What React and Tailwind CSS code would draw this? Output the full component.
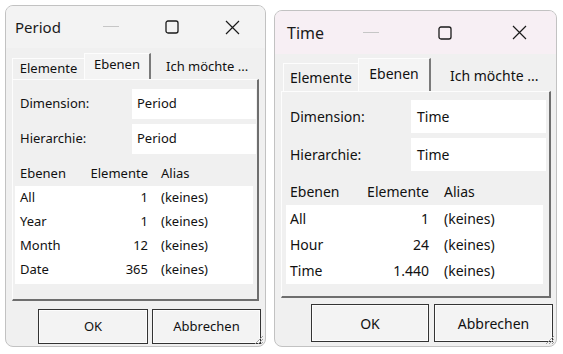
import React from "react";

const FONT = { fontFamily: '"Noto Sans", "Open Sans", sans-serif' };

const left = {
  title: "Period",
  name: "Period",
  rows: [
    ["All", "1"],
    ["Year", "1"],
    ["Month", "12"],
    ["Date", "365"],
  ],
  win: "w-[261px] h-[342px] mt-[5px] text-[13px]",
  bar: "h-[42px] bg-[#f3f3f3] pl-[9px] pr-[2px] text-[15px]",
  ctl: "w-[61px]",
  body: "pl-[6px] pt-[5px]",
  strip: "h-[26px]",
  tabA: "w-[72px] h-[21px]",
  tabB: "w-[67px] h-[26px]",
  tabC: "w-[108px] h-[21px] pl-[15px]",
  panel: "w-[247px] h-[222px]",
  field: "pl-[7px] pr-[1px]",
  fieldH: "h-[30px]",
  gap1: "pt-[9px] gap-[5px]",
  input: "w-[124px] pl-[5px]",
  head: "h-[20px] mt-[10px] pl-[7px]",
  list: "mx-[2px] w-[238px] h-[98px] mt-[2px]",
  row: "h-[24px] pl-[5px]",
  c1: "w-[80px]",
  c2: "w-[48px]",
  c3: "pl-[13px]",
  btns: "pt-[8px] pl-[26px] gap-[4px]",
  btn: "h-[35px]",
  ok: "w-[110px]",
  cancel: "w-[109px]",
};

const right = {
  title: "Time",
  name: "Time",
  rows: [
    ["All", "1"],
    ["Hour", "24"],
    ["Time", "1.440"],
  ],
  win: "w-[283px] h-[337px] mt-[10px] text-[14px]",
  bar: "h-[43px] bg-[#f7eff4] pl-[12px] pr-0 text-[16px]",
  ctl: "w-[74px]",
  body: "pl-[6px] pt-[4px]",
  strip: "h-[33px] pl-[2px]",
  tabA: "w-[75px] h-[28px]",
  tabB: "w-[73px] h-[33px]",
  tabC: "w-[118px] h-[28px] pl-[19px]",
  panel: "w-[270px] h-[207px]",
  field: "pl-[8px] pr-[3px]",
  fieldH: "h-[33px]",
  gap1: "pt-[8px] gap-[5px]",
  input: "w-[135px] pl-[6px]",
  head: "h-[22px] mt-[9px] pl-[8px]",
  list: "mx-[4px] w-[257px] h-[79px] mt-[3px]",
  row: "h-[26px] pl-[4px]",
  c1: "w-[76px]",
  c2: "w-[63px]",
  c3: "pl-[15px]",
  btns: "pt-[6px] pl-[30px] gap-[5px]",
  btn: "h-[38px]",
  ok: "w-[118px]",
  cancel: "w-[119px]",
};

function Controls({ c }) {
  return (
    <div className="flex h-full items-center">
      <div className={`${c.ctl} flex justify-center`}>
        <svg width="16" height="2" viewBox="0 0 16 2">
          <rect width="16" height="1" fill="#c6c6c6" />
        </svg>
      </div>
      <div className={`${c.ctl} flex justify-center`}>
        <svg width="14" height="14" viewBox="0 0 14 14">
          <rect x="1" y="1" width="12" height="12" rx="2" fill="none" stroke="#1a1a1a" strokeWidth="1.3" />
        </svg>
      </div>
      <div className={`${c.ctl} flex justify-center`}>
        <svg width="15" height="15" viewBox="0 0 15 15">
          <path d="M1 1 L14 14 M14 1 L1 14" stroke="#1a1a1a" strokeWidth="1.2" />
        </svg>
      </div>
    </div>
  );
}

function Grip() {
  return (
    <svg className="absolute right-[1px] bottom-[1px]" width="12" height="12" viewBox="0 0 12 12">
      <path d="M11 3 L3 11 M11 6 L6 11 M11 9 L9 11" stroke="#a0a0a0" strokeWidth="1" />
    </svg>
  );
}

function Dialog({ c }) {
  return (
    <div
      className={`${c.win} relative flex flex-col overflow-hidden rounded-[8px] border border-[#c2c2c2] bg-[#f0f0f0] text-[#111]`}
    >
      <div className={`${c.bar} flex items-center justify-between`}>
        <span className="text-[#1a1a1a]">{c.title}</span>
        <Controls c={c} />
      </div>
      <div className={`${c.body} flex flex-col`}>
        <div className={`${c.strip} flex items-end`}>
          <div className={`${c.tabA} flex items-center justify-center border-t border-l border-[#fdfdfd] bg-[#f0f0f0]`}>
            Elemente
          </div>
          <div
            className={`${c.tabB} flex items-center justify-center border-t border-l border-[#fdfdfd] border-r-2 border-r-[#7a7a7a] bg-[#f4f4f4] pb-[3px]`}
          >
            Ebenen
          </div>
          <div className={`${c.tabC} flex items-center pb-[3px]`}>Ich möchte ...</div>
        </div>
        <div
          className={`${c.panel} flex flex-col border-t border-l border-[#fdfdfd] border-r-2 border-b-2 border-r-[#6e6e6e] border-b-[#6e6e6e] bg-[#f0f0f0]`}
        >
          <div className={`${c.gap1} flex flex-col`}>
            <div className={`${c.field} ${c.fieldH} flex items-center justify-between`}>
              <span>Dimension:</span>
              <div className={`${c.input} h-full flex items-center bg-white`}>{c.name}</div>
            </div>
            <div className={`${c.field} ${c.fieldH} flex items-center justify-between`}>
              <span>Hierarchie:</span>
              <div className={`${c.input} h-full flex items-center bg-white`}>{c.name}</div>
            </div>
          </div>
          <div className={`${c.head} flex items-center`}>
            <span className={c.c1}>Ebenen</span>
            <span className={`${c.c2} flex justify-end whitespace-nowrap`}>
              <span>Elemente</span>
            </span>
            <span className={c.c3}>Alias</span>
          </div>
          <div className={`${c.list} bg-white`}>
            {c.rows.map(([n, v]) => (
              <div key={n} className={`${c.row} flex items-center`}>
                <span className={c.c1}>{n}</span>
                <span className={`${c.c2} text-right`}>{v}</span>
                <span className={c.c3}>(keines)</span>
              </div>
            ))}
          </div>
        </div>
        <div className={`${c.btns} flex`}>
          <div className={`${c.btn} ${c.ok} flex items-center justify-center border border-[#333] bg-[#f3f3f3] shadow-[inset_0_0_0_1px_#fcfcfc]`}>
            OK
          </div>
          <div className={`${c.btn} ${c.cancel} flex items-center justify-center border border-[#333] bg-[#f3f3f3] shadow-[inset_0_0_0_1px_#fcfcfc]`}>
            Abbrechen
          </div>
        </div>
      </div>
      <Grip />
    </div>
  );
}

export default function App() {
  return (
    <div className="flex h-[354px] w-[563px] items-start gap-[8px] bg-white pl-[5px]" style={FONT}>
      <Dialog c={left} />
      <Dialog c={right} />
    </div>
  );
}
